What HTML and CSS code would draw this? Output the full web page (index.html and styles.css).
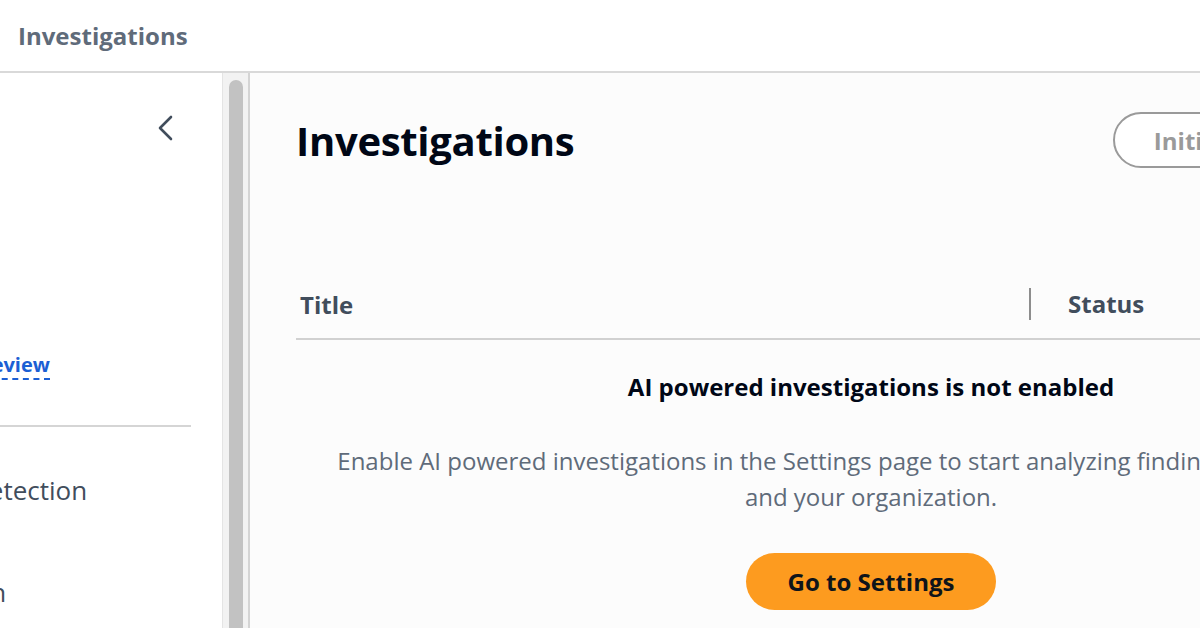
FILE: index.html
```html
<!DOCTYPE html>
<html lang="en">
<head>
    <meta charset="UTF-8">
    <meta name="viewport" content="width=device-width, initial-scale=1.0">
    <title>Investigations</title>
    <link rel="stylesheet" href="styles.css">
</head>
<body>
    <header class="topbar">
        <span class="crumb">Investigations</span>
    </header>

    <div class="layout">
        <nav class="sidebar">
            <div class="nav-head">
                <button class="collapse" aria-label="Close navigation">
                    <svg width="16" height="26" viewBox="0 0 16 26">
                        <polyline points="13,2 2,13 13,24" fill="none" stroke="#414d5c" stroke-width="2.6" stroke-linecap="round" stroke-linejoin="round"/>
                    </svg>
                </button>
            </div>
            <div class="nav-items">
                <a class="nav-link" href="#">Preview</a>
                <hr class="nav-divider">
                <div class="nav-item">Detection</div>
                <div class="nav-item">On</div>
            </div>
        </nav>

        <div class="scroll-track">
            <div class="scroll-thumb"></div>
        </div>

        <main class="content">
            <div class="page-header">
                <h1>Investigations</h1>
                <button class="btn-outline" disabled>Initiate investigation</button>
            </div>

            <div class="table">
                <div class="table-head">
                    <div class="col col-title">Title</div>
                    <div class="col col-status">Status</div>
                </div>
                <div class="empty">
                    <div class="empty-title">AI powered investigations is not enabled</div>
                    <p class="empty-text">Enable AI powered investigations in the Settings page to start analyzing findings in your account and your organization.</p>
                    <button class="btn-primary">Go to Settings</button>
                </div>
            </div>
        </main>
    </div>
</body>
</html>
```

FILE: styles.css
```css
body {
    font-family: 'Open Sans', 'Noto Sans', sans-serif;
    margin: 0;
    padding: 0;
    width: 1200px;
    height: 628px;
    overflow: hidden;
    background: #fcfcfc;
    color: #414d5c;
}
.topbar {
    height: 71px;
    background: #ffffff;
    border-bottom: 2px solid #d9d9d9;
    display: flex;
    align-items: center;
    padding-left: 18px;
    box-sizing: content-box;
}
.crumb {
    font-size: 24px;
    font-weight: 700;
    color: #5f6b7a;
}
.layout {
    display: flex;
    height: 555px;
}
.sidebar {
    width: 222px;
    flex: none;
    background: #ffffff;
    overflow: hidden;
}
.nav-head {
    display: flex;
    justify-content: flex-end;
    padding: 42px 48px 0 0;
}
.collapse {
    background: none;
    border: none;
    padding: 0;
    cursor: pointer;
    line-height: 0;
}
.nav-items {
    margin-left: -30px;
    padding-top: 211px;
}
.nav-link {
    display: inline-block;
    font-size: 20px;
    font-weight: 700;
    color: #1b5fd4;
    text-decoration: none;
    line-height: 26px;
    border-bottom: 2px dashed #1b5fd4;
}
.nav-divider {
    border: none;
    border-top: 2px solid #d5d5d5;
    margin: 45px 31px 0 0;
}
.nav-item {
    font-size: 26px;
    color: #414d5c;
    line-height: 34px;
    margin-top: 46px;
}
.nav-item + .nav-item {
    margin-top: 68px;
}
.scroll-track {
    width: 19px;
    flex: none;
    background: #f2f2f2;
    border-left: 1px solid #e4e4e4;
    border-right: 2px solid #d4d4d4;
    padding: 7px 0 0 6px;
    box-sizing: content-box;
}
.scroll-thumb {
    width: 14px;
    height: 100%;
    background: #c2c2c2;
    border-radius: 7px 7px 0 0;
}
.content {
    flex: none;
    width: 1150px;
    padding: 39px 46px 0 46px;
}
.page-header {
    display: flex;
    justify-content: space-between;
    align-items: center;
    height: 56px;
}
h1 {
    margin: 0;
    font-size: 40px;
    font-weight: 700;
    color: #000716;
    letter-spacing: -0.3px;
}
.btn-outline {
    font-family: inherit;
    height: 56px;
    padding: 0 39px;
    border: 2px solid #9a9a9a;
    border-radius: 28px;
    background: #ffffff;
    color: #9a9a9a;
    font-size: 24px;
    font-weight: 700;
}
.table {
    margin-top: 102px;
}
.table-head {
    display: flex;
    align-items: center;
    height: 68px;
    border-bottom: 2px solid #d1d1d1;
}
.col {
    font-size: 24px;
    font-weight: 700;
    color: #414d5c;
}
.col-title {
    width: 733px;
    padding-left: 4px;
    box-sizing: border-box;
}
.col-status {
    border-left: 2px solid #8d8d8d;
    padding-left: 37px;
    line-height: 32px;
}
.empty {
    text-align: center;
    padding-top: 32px;
}
.empty-title {
    font-size: 24px;
    font-weight: 700;
    color: #000716;
    line-height: 30px;
}
.empty-text {
    font-size: 24px;
    line-height: 36px;
    color: #5f6b7a;
    margin: 41px auto 0;
    max-width: 1110px;
}
.btn-primary {
    font-family: inherit;
    margin-top: 38px;
    height: 57px;
    padding: 0 42px;
    border: none;
    border-radius: 29px;
    background: #fd9b1f;
    color: #0f141a;
    font-size: 24px;
    font-weight: 700;
    cursor: pointer;
}
```
